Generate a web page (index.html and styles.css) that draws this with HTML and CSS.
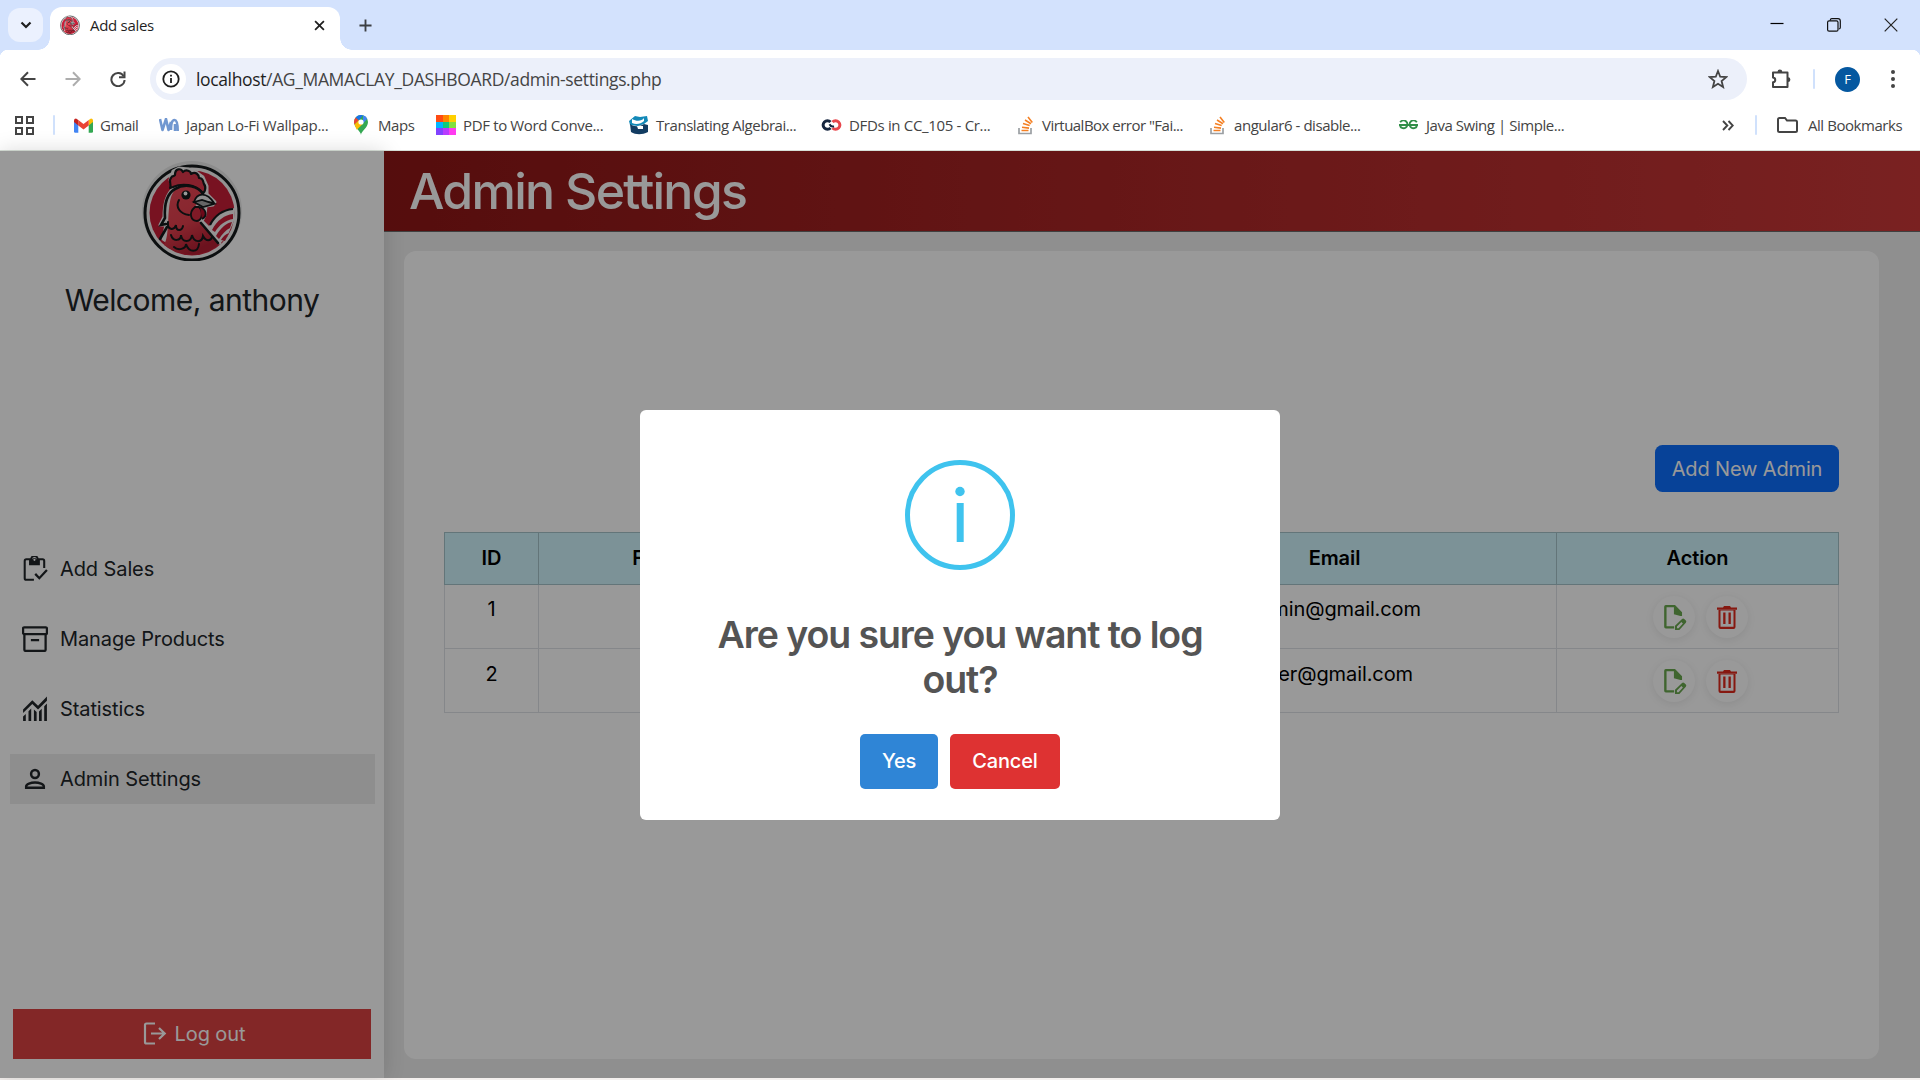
FILE: index.html
```html
<!DOCTYPE html>
<html lang="en">
<head>
<meta charset="utf-8">
<title>Add sales</title>
<link rel="stylesheet" href="styles.css">
</head>
<body>
<svg class="defs" aria-hidden="true">
  <linearGradient id="plumage" x1="0" y1="0" x2="0.400" y2="1"><stop offset="0" stop-color="#ee4958"/><stop offset=".6" stop-color="#e23f4d"/><stop offset="1" stop-color="#b51f33"/></linearGradient>
  <symbol id="rooster" viewBox="0 0 100 100">
    <circle cx="50" cy="50" r="50" fill="#e9eaea"/>
    <circle cx="50" cy="52" r="47" fill="#f5f3f3" stroke="#14191b" stroke-width="3"/>
    <circle cx="50" cy="52" r="42.500" fill="#c81e38"/>
    <path d="M21 78 24 64 18 64 22 56C22 42 26 32 31 28L28 19 31 10 37 7 46 8 54 11 61 16 65 25 65 33 73 41 71 44 64 45 63 54 60 60 66 66 78 82 60 80 30 84Z" fill="#f5f3f3" stroke="#f5f3f3" stroke-width="3" stroke-linejoin="round"/>
    <path d="M66 68C70 57 79 49 93 47L92 60 84 78 78 82Z" fill="#f5f3f3"/>
    <path d="M68 64C73 54 81 49 91 48" fill="none" stroke="#14191b" stroke-width="2.200"/>
    <path d="M70 69C75 59 83 54 91 53L91 58C84 59 77 64 73 71ZM74 75C79 66 85 62 90 61L88 67C84 69 80 73 77 78ZM79 79C82 74 85 73 87 72L83 80Z" fill="#c81e38"/>
    <path d="M28 27C30 23 26 20 29 17 30 14 32 16 33 14 33 7 39 7 41 11 44 8 49 10 49 13 54 10 57 14 57 17 62 17 61 22 62 23 65 27 62 32 61 32 53 23 40 22 31 26Z" fill="#e0374b" stroke="#14191b" stroke-width="2.200" stroke-linejoin="round"/>
    <path d="M24 79C28 66 24 38 33 29 43 22 57 26 61 35L54 44 50 54 59 62 77 83 68 90 52 94 34 91 22 84Z" fill="url(#plumage)"/>
    <path d="M18 78 25 66M24 63 19 64 23 57C22 42 26 32 33 28 43 22 56 25 61 33M59 62 76 82" fill="none" stroke="#14191b" stroke-width="2.600" stroke-linecap="round"/>
    <path d="M37 39C33 46 38 53 47 54M26 61C25 69 32 70 34 64 34 71 40 70 41 65M29 74C31 81 39 80 39 74 40 82 49 82 50 74 52 82 60 82 61 75 64 81 69 80 70 76M32 86C36 90 44 88 44 83 47 92 56 92 57 83" fill="none" stroke="#14191b" stroke-width="2" stroke-linecap="round"/>
    <path d="M52 41C55 31 65 31 72 42L63 41Z" fill="#efefef" stroke="#14191b" stroke-width="1.800"/>
    <path d="M52 41 60 39 72 43 61 46Z" fill="#aaa" stroke="#14191b" stroke-width="1.800"/>
    <path d="M53 46C46 52 49 60 55 60 61 59 61 50 57 46Z" fill="#d42c42" stroke="#14191b" stroke-width="1.800"/>
    <path d="M58 46C64 48 66 55 60 58" fill="#b80f2b" stroke="#14191b" stroke-width="1.800"/>
    <circle cx="44" cy="34" r="4.600" fill="#14191b"/><circle cx="43.500" cy="32.500" r="1.900" fill="#fff"/>
  </symbol>
  <symbol id="stack" viewBox="0 0 16 20">
    <path d="M1 13v5.500h12V13" fill="none" stroke="#9b9fa3" stroke-width="1.700"/>
    <path d="M3.500 15.500h7M4 12.300l7 .8M5 8.500l6.700 2M7 5l6 3.700M10 2l4.300 5.500" stroke="#f48024" stroke-width="1.600"/>
  </symbol>
  <symbol id="edit" viewBox="0 0 24 24">
    <path d="M8.500 22.500H3.500A1.500 1.500 0 0 1 2 21V2.500A1.500 1.500 0 0 1 3.500 1H12l6.500 6.500V11H17L11 9.500V3H4.200v17.500h7v2Z"/>
    <path fill-rule="evenodd" d="M12 24v-4l6.500-6.200a1.500 1.500 0 0 1 2 0l1.500 1.500a1.500 1.500 0 0 1 0 2L16 24ZM13.800 20.700v1.600h1.500l4-4.200-1.400-1.500Z"/>
  </symbol>
  <symbol id="trash" viewBox="0 0 24 24">
    <path d="M2 2.500h6L9 1h6l1 1.500h6v2.300H2ZM3.500 5h17v17a2 2 0 0 1-2 2h-13a2 2 0 0 1-2-2ZM5.500 5.500v16.300h13V5.500ZM8.200 7.500h2.300v11.500H8.200ZM13.500 7.500h2.300v11.500h-2.300Z" fill-rule="evenodd"/>
  </symbol>
</svg>

<header class="browser">
  <div class="tabstrip">
    <button class="tabsearch"><svg width="12" height="12" viewBox="0 0 12 12"><path d="M1.500 3.500 6 8l4.500-4.500" fill="none" stroke="#1f1f1f" stroke-width="2.200"/></svg></button>
    <div class="tab">
      <svg class="favicon" viewBox="0 0 100 100"><use href="#rooster"/></svg>
      <span class="tabtitle">Add sales</span>
      <svg class="tabclose" viewBox="0 0 12 12"><path d="m1.200 1.200 9.600 9.600m0-9.600-9.600 9.600" stroke="#1f1f1f" stroke-width="1.900"/></svg>
    </div>
    <svg class="newtab" viewBox="0 0 14 14"><path d="M7 0.500v13M.5 7h13" stroke="#3c3f43" stroke-width="2"/></svg>
    <div class="winctl">
      <svg width="14" height="14" viewBox="0 0 14 14"><path d="M.5 5.500h13" stroke="#000" stroke-width="1.200"/></svg>
      <svg width="14" height="14" viewBox="0 0 14 14" fill="none" stroke="#111" stroke-width="1.200"><rect x=".6" y="2.800" width="10.400" height="10.400" rx="1.500"/><path d="M3.300 2.500V2A1.500 1.500 0 0 1 4.800.7H11A2.300 2.300 0 0 1 13.300 3v6.500a1.500 1.500 0 0 1-1.500 1.500"/></svg>
      <svg width="14" height="14" viewBox="0 0 14 14"><path d="m.7.7 12.600 12.600m0-12.600L.7 13.300" stroke="#222" stroke-width="1.200"/></svg>
    </div>
  </div>

  <div class="toolbar">
    <div class="navs">
      <svg width="16" height="16" viewBox="0 0 16 16" fill="none" stroke="#444" stroke-width="2"><path d="M15.500 8H1.500M8 1.200 1.300 8 8 14.800"/></svg>
      <svg width="16" height="16" viewBox="0 0 16 16" fill="none" stroke="#adadad" stroke-width="2"><path d="M.5 8h14M8 1.200 14.700 8 8 14.800"/></svg>
      <svg width="16" height="16" viewBox="0 0 16 16"><path d="M13.700 5.200A6.600 6.600 0 1 0 14.600 9" fill="none" stroke="#444" stroke-width="2"/><path d="M15.500.5v6.700H9V5.200h4.500V.5Z" fill="#444"/></svg>
    </div>
    <div class="omnibox">
      <span class="siteinfo"><svg width="18" height="18" viewBox="0 0 18 18"><circle cx="9" cy="9" r="7.700" fill="none" stroke="#1f1f1f" stroke-width="1.800"/><path d="M9 8v5M9 4.700v1.900" stroke="#1f1f1f" stroke-width="1.800"/></svg></span>
      <span class="url"><b>localhost</b>/AG_MAMACLAY_DASHBOARD/admin-settings.php</span>
      <svg class="star" viewBox="0 0 20 20"><path d="m10 2 2.200 5.700 6 .4-4.600 3.900 1.500 6-5.100-3.300L4.900 18l1.500-6L1.800 8.100l6-.4Z" fill="none" stroke="#444" stroke-width="1.800"/></svg>
    </div>
    <svg class="puzzle" viewBox="0 0 22 22"><path d="M3 4.500h14.500v14.500H3v-4.700c3-.5 3-4.200 0-4.700Z" fill="none" stroke="#444" stroke-width="2" stroke-linejoin="round"/><path d="M7.500 4a2.400 2.400 0 0 1 4.800 0ZM18 9.300a2.400 2.400 0 0 1 0 4.800Z" fill="#444"/></svg>
    <i class="divider"></i>
    <span class="avatar">F</span>
    <svg class="dots" viewBox="0 0 4 18"><circle cx="2" cy="2" r="2"/><circle cx="2" cy="9" r="2"/><circle cx="2" cy="16" r="2"/></svg>
  </div>

  <nav class="bookmarks">
    <svg class="apps" viewBox="0 0 19 19" fill="none" stroke="#444" stroke-width="2"><path d="M1 1h6v6H1zM12 1h6v6h-6zM1 12h6v6H1zM12 12h6v6h-6z"/></svg>
    <i class="divider"></i>
    <div class="marks">
      <a class="mark m1"><svg width="19" height="15" viewBox="0 0 19 15"><path d="M0 2v11.500q0 1.200 1.200 1.200h3.100V6Z" fill="#4285f4"/><path d="M14.700 6v8.700h3.100q1.200 0 1.200-1.200V2Z" fill="#34a853"/><path d="M14.700 2 17 .5q2 0 2 2V4l-4.300 3.500Z" fill="#fbbc04"/><path d="M4.300 2 9.500 6l5.200-4v5.500l-5.200 4-5.200-4Z" fill="#ea4335"/><path d="M4.300 2 2 .5Q0 .5 0 2.500V4l4.300 3.500Z" fill="#c5221f"/></svg><span>Gmail</span></a>
      <a class="mark m2"><svg width="20" height="14" viewBox="0 0 20 14" fill="none" stroke="#7197d0" stroke-width="2.600" stroke-linejoin="round"><path d="m1 1 2.500 11L7 1l2.500 11L12 4M12 12c0-6 1-10 3.500-10S18.700 6 18.700 13M16 6v7"/></svg><span>Japan Lo-Fi Wallpap...</span></a>
      <a class="mark m3"><svg width="14" height="20" viewBox="0 0 14 20"><path d="M7 20c0-4-7-7-7-13a7 7 0 0 1 14 0c0 6-7 9-7 13Z" fill="#34a853"/><path d="M.5 9.500A7 7 0 0 1 1.700 2.500L5 5.200Z" fill="#ea4335"/><path d="M1.700 2.500A7 7 0 0 1 9 .3L5 5.200Z" fill="#1a73e8"/><path d="M9 .3a7 7 0 0 1 4.200 3.500L9 8.600Z" fill="#4285f4"/><path d="m.5 9.500 4.300-4.200L9 8.700l-6.200 6Z" fill="#fbbc04"/><circle cx="7" cy="7" r="2.600" fill="#fff"/></svg><span>Maps</span></a>
      <a class="mark m4"><svg width="20" height="20" viewBox="0 0 3 3" shape-rendering="crispEdges"><path fill="#ff4b13" d="M0 0h1v1H0z"/><path fill="#ff8500" d="M1 0h1v1H1z"/><path fill="#ffd000" d="M2 0h1v1H2z"/><path fill="#00b5ff" d="M0 1h1v1H0z"/><path fill="#0fcb7b" d="M1 1h1v1H1z"/><path fill="#82e03f" d="M2 1h1v1H2z"/><path fill="#8142ff" d="M0 2h1v1H0z"/><path fill="#b83cff" d="M1 2h1v1H1z"/><path fill="#ff3bf0" d="M2 2h1v1H2z"/></svg><span>PDF to Word Conve...</span></a>
      <a class="mark m5"><svg width="20" height="20" viewBox="0 0 20 20"><path d="M0 6 6 1l5 1 7-1 1 5-4 3-6 2-8-1Z" fill="#1389b8"/><path d="M3 4c5 3 10 2 12-1v3c-3 3-8 4-12 2Z" fill="#fff"/><path d="M1 9c4 3 9 3 14 0l4 1v7c-6 3-12 3-17 0Z" fill="#123c62"/><path d="M8 11h6v3H9Z" fill="#fff"/></svg><span>Translating Algebrai...</span></a>
      <a class="mark m6"><svg width="21" height="12" viewBox="0 0 21 12" fill="none" stroke-width="3"><path d="M9.500 3A4.300 4.300 0 1 0 9.500 9" stroke="#16263f"/><path d="M11.500 3a4.300 4.300 0 1 1 0 6" stroke="#e8474c"/><path d="M8.500 5.200c1 2 3 2.500 4.500 2" stroke="#16263f" stroke-width="2"/></svg><span>DFDs in CC_105 - Cr...</span></a>
      <a class="mark m7"><svg width="16" height="20"><use href="#stack"/></svg><span>VirtualBox error "Fai...</span></a>
      <a class="mark m8"><svg width="16" height="20"><use href="#stack"/></svg><span>angular6 - disable...</span></a>
      <a class="mark m9"><svg width="19" height="10" viewBox="0 0 19 10" fill="none" stroke="#2f8d46" stroke-width="1.800"><path d="M1.200 2.300A3.900 3.900 0 1 1 1 6M0 5h19M17.800 2.300A3.900 3.900 0 1 0 18 6"/></svg><span>Java Swing | Simple...</span></a>
    </div>
    <svg class="more" viewBox="0 0 12 11"><path d="m1 1 4.300 4.500L1 10M6.500 1l4.300 4.500L6.500 10" fill="none" stroke="#444" stroke-width="1.900"/></svg>
    <i class="divider"></i>
    <a class="mark all"><svg width="21" height="16" viewBox="0 0 21 16"><path d="M1 13.500v-11Q1 1 2.500 1H8l2 2.500h8.500Q20 3.500 20 5v8.500q0 1.500-1.500 1.500h-16Q1 15 1 13.500Z" fill="none" stroke="#444" stroke-width="2"/></svg><span>All Bookmarks</span></a>
  </nav>
</header>

<div class="app">
  <aside class="sidebar">
    <svg class="logo" viewBox="0 0 100 100"><use href="#rooster"/></svg>
    <h2 class="welcome">Welcome, anthony</h2>
    <nav class="menu">
      <a class="item"><svg viewBox="0 0 24 24"><path d="M11 22H4a1.500 1.500 0 0 1-1.500-1.500v-16A1.500 1.500 0 0 1 4 3h4.500a3 3 0 0 1 6 0H19a1.500 1.500 0 0 1 1.500 1.500V11" fill="none" stroke="currentColor" stroke-width="1.900"/><path fill-rule="evenodd" d="M6.500 3.500H9a2.700 2.700 0 0 1 5 0h2.500v5h-10ZM11.500 2.500a1 1 0 1 0 0 2 1 1 0 0 0 0-2"/><path d="m12.200 16.500 3.800 4 7-7.500" fill="none" stroke="currentColor" stroke-width="2.100"/></svg>Add Sales</a>
      <a class="item"><svg viewBox="0 0 24 24" fill="none" stroke="currentColor" stroke-width="2.100"><rect x="1" y="1.200" width="22" height="6.300" rx="1"/><path d="M2.200 7.500V22q0 1 1 1h17.600q1 0 1-1V7.500M8.200 13h7.600"/></svg>Manage Products</a>
      <a class="item"><svg viewBox="0 0 24 24"><path d="M1 12.500 9.500 4l5.300 5L23 .5v3.800l-8.200 8.200-5.300-5.200L1 15.800ZM1 19l2.500-2.500V23H1ZM6 14l2.500-2.500V23H6ZM11 12.500l2.500 2.300V23H11ZM15.700 14.200l2.500-2.500V23h-2.500ZM20.500 9.500 23 7v16h-2.500Z"/></svg>Statistics</a>
      <a class="item active"><svg viewBox="0 0 26 26" fill="none" stroke="currentColor" stroke-width="2.500"><circle cx="13" cy="8" r="3.900"/><path d="M4.200 21.800v-1.600c0-2.200 4.500-3.600 8.800-3.600s8.800 1.400 8.800 3.600v1.600Z"/></svg>Admin Settings</a>
    </nav>
    <a class="logout"><svg width="24" height="24" viewBox="0 0 24 24" fill="none" stroke="#fff" stroke-width="2.200"><path d="M12 1.500H3.500Q2 1.500 2 3v17q0 1.500 1.500 1.500H12M8 11.500h13.500M16 6l5.700 5.500L16 17"/></svg>Log out</a>
  </aside>
  <main class="main">
    <div class="titlebar"><h1>Admin Settings</h1></div>
    <section class="panel">
      <button class="add">Add New Admin</button>
      <table>
        <colgroup><col class="cid"><col class="cname"><col class="cuser"><col class="cmail"><col class="cact"></colgroup>
        <thead><tr><th>ID</th><th>Full Name</th><th>Username</th><th>Email</th><th>Action</th></tr></thead>
        <tbody>
          <tr class="first"><td>1</td><td></td><td></td><td>admin@gmail.com</td><td><div class="acts"><span class="act edit"><svg><use href="#edit"/></svg></span><span class="act del"><svg><use href="#trash"/></svg></span></div></td></tr>
          <tr><td>2</td><td></td><td></td><td>user@gmail.com</td><td><div class="acts"><span class="act edit"><svg><use href="#edit"/></svg></span><span class="act del"><svg><use href="#trash"/></svg></span></div></td></tr>
        </tbody>
      </table>
    </section>
  </main>
  <div class="overlay">
    <div class="dialog">
      <svg class="info" viewBox="0 0 110 110"><circle cx="55" cy="55" r="52.500" fill="none" stroke="#3fc3ee" stroke-width="5"/><circle cx="55" cy="31.500" r="4.700" fill="#3fc3ee"/><path d="M55.200 43v39" stroke="#3fc3ee" stroke-width="7"/></svg>
      <h2>Are you sure you want to log out?</h2>
      <div class="btns"><button class="yes">Yes</button><button class="cancel">Cancel</button></div>
    </div>
  </div>
</div>
</body>
</html>
```
FILE: styles.css
```css
* { box-sizing: border-box; }
body { margin: 0; width: 1920px; height: 1080px; overflow: hidden; display: flex; flex-direction: column; background: #f4f0ee; font-family: Inter, "Liberation Sans", sans-serif; }
h1, h2 { margin: 0; }
button { border: 0; padding: 0; font: inherit; }
svg { flex: none; display: block; }
.defs { position: absolute; width: 0; height: 0; }

/* browser window */
.browser { height: 151px; flex: none; background: #fff; border-bottom: 1px solid #d7dfd7; font-family: "Open Sans", "Noto Sans", sans-serif; color: #444; }
.tabstrip { height: 58px; margin-bottom: -8px; background: linear-gradient(#d3e2fd 50px, transparent 50px), radial-gradient(circle at 8px 58px, transparent 8px, #d3e2fd 8.500px) 0 0 / 8px 58px no-repeat, radial-gradient(circle at 0 58px, transparent 8px, #d3e2fd 8.500px) 100% 0 / 8px 58px no-repeat; display: flex; align-items: flex-start; padding: 7px 22px 0 8px; }
.tabsearch { width: 35px; height: 34px; margin-top: 1px; border-radius: 12px; background: #ebf1fe; display: flex; align-items: center; justify-content: center; }
.tab { position: relative; width: 290px; height: 43px; margin-left: 7px; background: #fff; border-radius: 12px 12px 0 0; display: flex; align-items: center; padding: 0 15px 7px 10px; }
.tab::before, .tab::after { content: ""; position: absolute; bottom: 0; width: 12px; height: 12px; }
.tab::before { left: -12px; background: radial-gradient(circle at 0 0, transparent 11.500px, #fff 12px); }
.tab::after { right: -12px; background: radial-gradient(circle at 100% 0, transparent 11.500px, #fff 12px); }
.favicon { width: 20px; height: 20px; }
.tabtitle { flex: 1; margin: 0 0 0 10px; font-size: 15px; letter-spacing: -0.300px; color: #1f1f1f; }
.tabclose { width: 11px; height: 11px; }
.newtab { width: 13px; height: 13px; margin: 12px 0 0 19px; }
.winctl { margin: 11px 0 0 auto; display: flex; gap: 43px; }
.toolbar { height: 58px; display: flex; align-items: center; padding: 0 25px 0 20px; }
.navs { width: 130px; display: flex; gap: 29px; }
.omnibox { width: 1597px; height: 42px; border-radius: 21px; background: #ecf0fa; display: flex; align-items: center; padding: 0 19px 0 6px; }
.siteinfo { width: 30px; height: 30px; border-radius: 50%; background: #fff; display: flex; align-items: center; justify-content: center; }
.url { flex: 1; margin-left: 10px; font-size: 17.500px; letter-spacing: -0.360px; }
.url b { font-weight: 400; color: #1f1f1f; }
.star { width: 20px; height: 20px; }
.puzzle { width: 22px; height: 22px; margin-left: 23px; }
.divider { width: 2px; height: 20px; background: #d0e1fc; border-radius: 1px; }
.toolbar .divider { margin-left: 21px; }
.avatar { width: 25px; height: 25px; margin-left: 20px; border-radius: 50%; background: #0558a0; color: #fff; font-size: 13px; line-height: 25px; text-align: center; }
.dots { width: 4px; height: 18px; margin-left: auto; fill: #444; }
.bookmarks { height: 34px; display: flex; align-items: center; padding: 0 0 0 15px; font-size: 15px; }
.apps { width: 19px; height: 19px; margin-right: 19px; }
.marks { display: flex; width: 1667px; padding-left: 19px; }
.mark { display: flex; align-items: center; white-space: nowrap; letter-spacing: -0.450px; }
.mark span { line-height: 20px; }
.m1 { width: 85px; gap: 7px; }
.m2 { width: 195px; gap: 7px; letter-spacing: -0.270px; }
.m3 { width: 82px; gap: 10px; }
.m4 { width: 193px; gap: 7px; letter-spacing: -0.350px; }
.m5 { width: 192px; gap: 7px; }
.m6 { width: 197px; gap: 7px; letter-spacing: -0.330px; }
.m7 { width: 192px; gap: 8px; letter-spacing: -0.520px; }
.m8 { width: 189px; gap: 8px; }
.m9 { gap: 8px; }
.more { width: 12px; height: 11px; }
.more + .divider { margin: 0 20px 0 21px; }
.all { gap: 10px; }

/* application */
.app { position: relative; height: 927px; display: flex; background: #eee; letter-spacing: -0.100px; }
.sidebar { position: relative; z-index: 1; width: 384px; background: #fff; box-shadow: 0 0 20px rgba(0,0,0,.15); display: flex; flex-direction: column; align-items: center; padding: 10px 13px 19px; color: #212529; }
.logo { width: 100px; height: 100px; }
.welcome { margin-top: 21px; font-size: 30px; line-height: 36px; font-weight: 400; letter-spacing: -0.520px; white-space: nowrap; }
.menu { margin-top: 226px; align-self: stretch; display: flex; flex-direction: column; gap: 20px; margin-left: -3px; margin-right: -4px; }
.item { height: 50px; display: flex; align-items: center; gap: 12px; padding-left: 12px; font-size: 20px; }
.item svg { width: 26px; height: 26px; fill: currentColor; }
.item svg[fill="none"] { fill: none; }
.item.active { background: #ededed; }
.logout { margin-top: auto; width: 358px; height: 50px; padding-left: 4px; background: #db4141; color: #fff; font-size: 20px; display: flex; align-items: center; justify-content: center; gap: 8px; }
.main { flex: 1; display: flex; flex-direction: column; }
.titlebar { position: relative; z-index: 2; height: 81px; background: linear-gradient(to right, #8e1616, #cb3838); border-bottom: 1px solid #6c6c6c; padding-left: 25px; color: #fff; }
.titlebar h1 { font-size: 50px; line-height: 80px; font-weight: 500; letter-spacing: -1.720px; }
.panel { width: 1475px; height: 808px; margin: 19px 0 0 20px; border-radius: 12px; background: #fff; padding: 194px 40px 0; display: flex; flex-direction: column; align-items: flex-end; }
.add { width: 184px; height: 47px; border-radius: 7.500px; background: #0d6efd; color: #fff; font-size: 20px; letter-spacing: -0.150px; }
table { width: 1395px; margin-top: 40px; table-layout: fixed; border-collapse: collapse; font-size: 20px; text-align: center; color: #000; }
.cid { width: 94px; }
.cname { width: 282px; }
.cuser { width: 292px; }
.cmail { width: 444px; }
.cact { width: 282px; }
th, td { border: 1px solid #dee2e6; height: 64px; padding: 10px 0 0; vertical-align: top; line-height: 30px; }
th { height: 52px; background: #cff4fc; border-color: #a6c3ca; font-weight: 600; }
.first td { padding-top: 9px; }
.acts { display: flex; justify-content: center; gap: 11px; padding: 1px 0 0 6px; }
.first .acts { padding-top: 2px; }
.act { width: 42px; height: 42px; border-radius: 50%; background: #fff; box-shadow: 0 2px 8px rgba(0,0,0,.08); display: flex; align-items: center; justify-content: center; }
.act svg { width: 24px; height: 24px; }
.act.edit svg { width: 26px; height: 26px; margin-left: 2px; }
.edit { fill: #6aa84f; }
.del { fill: #e0291c; }
.overlay { position: absolute; inset: 0; z-index: 5; background: rgba(0,0,0,.4); display: flex; align-items: center; justify-content: center; }
.dialog { width: 640px; height: 410px; border-radius: 6px; background: #fff; display: flex; flex-direction: column; align-items: center; padding-top: 50px; }
.info { width: 110px; height: 110px; }
.dialog h2 { margin-top: 42px; padding: 0 70px; color: #545454; font-size: 37.500px; line-height: 45px; font-weight: 600; letter-spacing: -1.080px; text-align: center; }
.btns { margin-top: 32px; display: flex; gap: 12px; color: #fff; font-size: 20px; font-weight: 500; }
.btns button { height: 55px; border-radius: 5px; color: #fff; letter-spacing: -0.150px; }
.yes { width: 78px; background: #2f85d6; }
.cancel { width: 110px; background: #de3232; }
```
